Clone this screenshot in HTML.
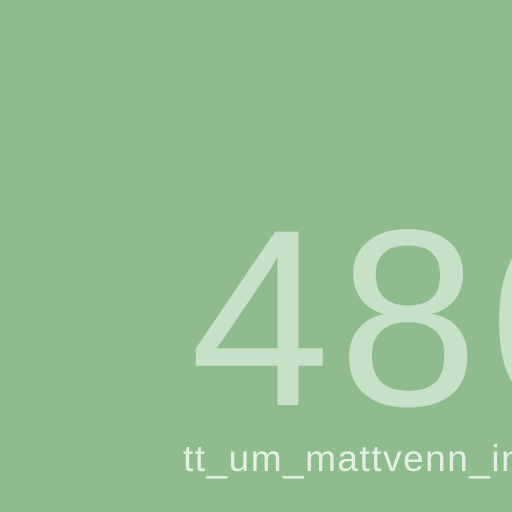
<!DOCTYPE html>
<html><head><style>
html,body{margin:0;padding:0}
body{width:512px;height:512px;background:#8fbc8f;position:relative;overflow:hidden;font-family:"Liberation Sans",sans-serif}
.big{position:absolute;left:190px;top:193px;font-size:252px;line-height:1;color:#c7e0c7;white-space:nowrap;letter-spacing:8px}
.small{position:absolute;left:183px;top:440px;font-size:37px;line-height:1;color:#e2efe2;white-space:nowrap;letter-spacing:1.5px}
</style></head><body>
<div class="big">486</div>
<div class="small">tt_um_mattvenn_in</div>
</body></html>
